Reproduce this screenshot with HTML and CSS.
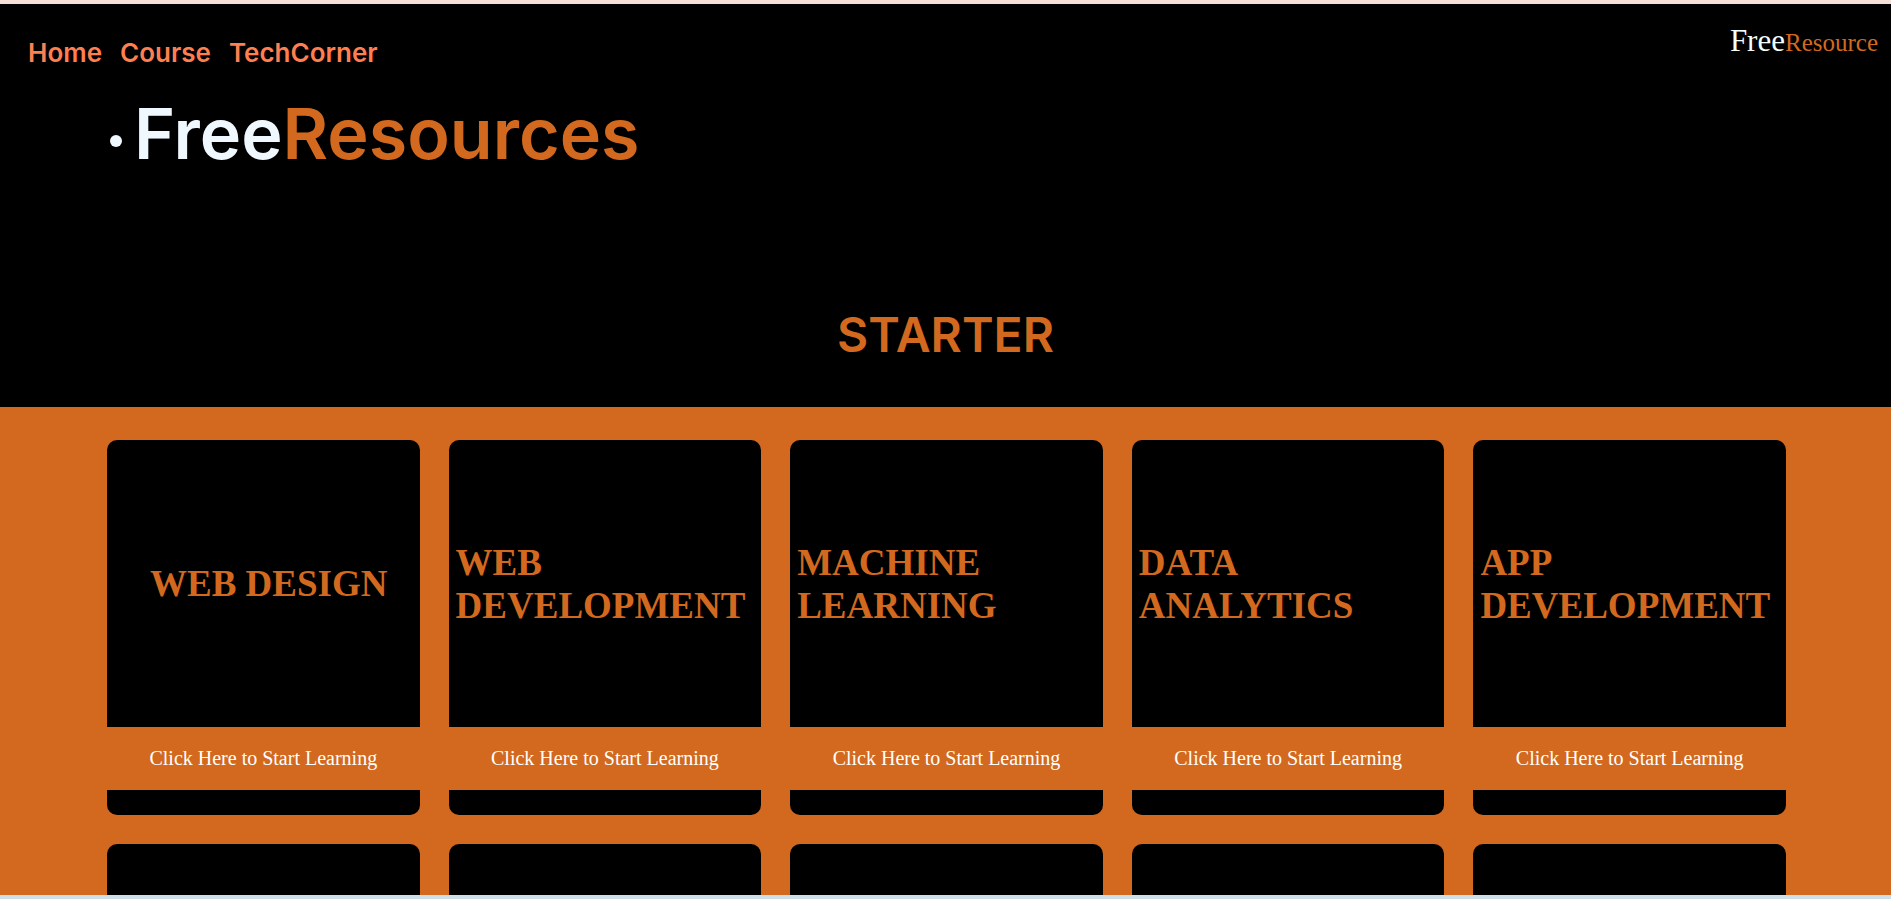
FILE: index.html
```html
<!DOCTYPE html>
<html lang="en">
<head>
  <meta charset="utf-8">
  <meta name="viewport" content="width=device-width, initial-scale=1">
  <title>FreeResources</title>
  <link rel="stylesheet" href="styles.css">
</head>
<body class="frame">
  <div class="page">
    <header class="topbar">
      <nav class="nav">
        <a class="nav-link" href="#">Home</a>
        <a class="nav-link" href="#">Course</a>
        <a class="nav-link" href="#">TechCorner</a>
      </nav>
      <div class="logo">Free<span class="logo-accent">Resource</span></div>
    </header>

    <ul class="hero">
      <li class="hero-item"><h1 class="hero-title">Free<span class="accent">Resources</span></h1></li>
    </ul>

    <h2 class="section-title">STARTER</h2>

    <main class="courses">
      <article class="card">
        <div class="card-body card-body-inset"><h3 class="card-title">WEB DESIGN</h3></div>
        <a class="card-link" href="#">Click Here to Start Learning</a>
      </article>
      <article class="card">
        <div class="card-body"><h3 class="card-title">WEB DEVELOPMENT</h3></div>
        <a class="card-link" href="#">Click Here to Start Learning</a>
      </article>
      <article class="card">
        <div class="card-body"><h3 class="card-title">MACHINE LEARNING</h3></div>
        <a class="card-link" href="#">Click Here to Start Learning</a>
      </article>
      <article class="card">
        <div class="card-body"><h3 class="card-title">DATA ANALYTICS</h3></div>
        <a class="card-link" href="#">Click Here to Start Learning</a>
      </article>
      <article class="card">
        <div class="card-body"><h3 class="card-title">APP DEVELOPMENT</h3></div>
        <a class="card-link" href="#">Click Here to Start Learning</a>
      </article>
      <article class="card"></article>
      <article class="card"></article>
      <article class="card"></article>
      <article class="card"></article>
      <article class="card"></article>
    </main>
  </div>
</body>
</html>
```

FILE: styles.css
```css
* {
  box-sizing: border-box;
}

.frame {
  display: flex;
  flex-direction: column;
  height: 100vh;
  margin: 0;
  border-top: 4px solid #f5dfd8;
  border-bottom: 4px solid #cddfe8;
  background: #000;
  font-family: "Liberation Serif", "Times New Roman", serif;
}

.page {
  flex: 1;
  min-height: 0;
  overflow-y: auto;
  scrollbar-width: none;
  box-shadow: 0 0 0 1px #a9a9a9;
}

.topbar {
  display: flex;
  justify-content: space-between;
  align-items: flex-start;
  padding: 19px 13px 0 28px;
}

.nav {
  display: flex;
  gap: 18px;
  padding-top: 10px;
}

.nav-link {
  color: coral;
  font: 600 26px/40px Inter, "Open Sans", sans-serif;
  text-decoration: none;
}

.logo {
  color: azure;
  font-size: 31px;
  line-height: 36px;
}

.logo-accent {
  color: chocolate;
  font-size: 25px;
}

.accent {
  color: chocolate;
}

.hero {
  margin: 0;
  padding: 8px 0 0 110px;
  color: aliceblue;
  font: 600 70px/106px Inter, "Open Sans", sans-serif;
  list-style: none;
}

.hero-item {
  display: flex;
  align-items: center;
  gap: 12px;
}

.hero-item::before {
  content: "";
  width: 12px;
  height: 12px;
  margin-top: 14px;
  border-radius: 50%;
  background: aliceblue;
}

.hero-title {
  margin: 0;
  font: inherit;
}

.section-title {
  margin: 0;
  padding: 110px 0 34px;
  color: chocolate;
  font: 600 48px/76px Inter, "Open Sans", sans-serif;
  text-align: center;
}

.courses {
  display: grid;
  grid-template-columns: repeat(5, 1fr);
  grid-auto-rows: 375px;
  gap: 29px;
  padding: 33px 105px 33px 107px;
  background: chocolate;
}

.card {
  display: flex;
  flex-direction: column;
  min-width: 0;
  padding-bottom: 25px;
  border-radius: 10px;
  background: #000;
}

.card-body {
  display: flex;
  flex: 1;
  align-items: center;
  padding-left: 7px;
}

.card-body-inset {
  padding-left: 43px;
}

.card-title {
  margin: 0;
  color: chocolate;
  font-size: 37px;
  line-height: 43px;
}

.card-link {
  padding: 20px 0;
  background: chocolate;
  color: #fff;
  font-size: 20px;
  line-height: 23px;
  text-align: center;
  text-decoration: none;
}
```
